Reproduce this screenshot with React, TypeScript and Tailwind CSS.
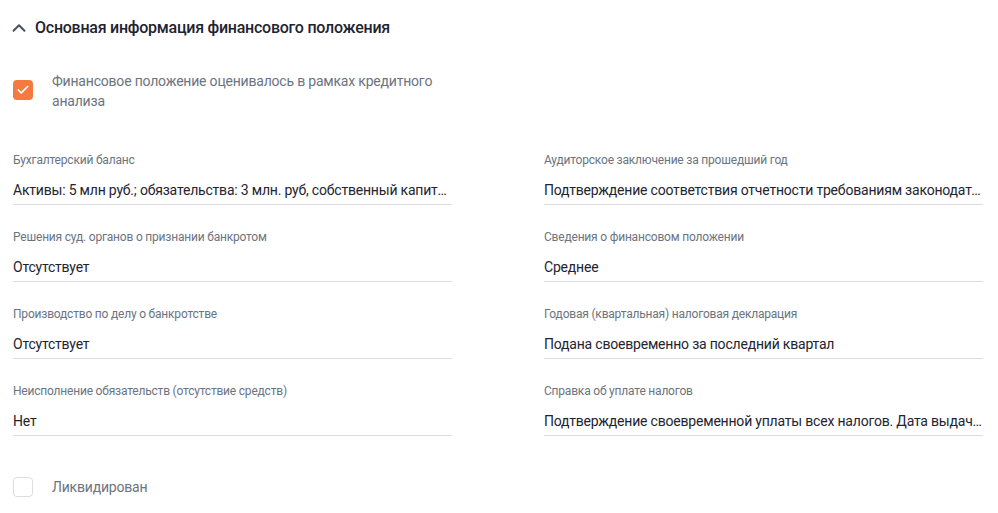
import { ChevronUp, Check } from "lucide-react"

const fields = [
  { label: "Бухгалтерский баланс", value: "Активы: 5 млн руб.; обязательства: 3 млн. руб, собственный капитал: 2 млн руб." },
  { label: "Аудиторское заключение за прошедший год", value: "Подтверждение соответствия отчетности требованиям законодательства" },
  { label: "Решения суд. органов о признании банкротом", value: "Отсутствует" },
  { label: "Сведения о финансовом положении", value: "Среднее" },
  { label: "Производство по делу о банкротстве", value: "Отсутствует" },
  { label: "Годовая (квартальная) налоговая декларация", value: "Подана своевременно за последний квартал" },
  { label: "Неисполнение обязательств (отсутствие средств)", value: "Нет" },
  { label: "Справка об уплате налогов", value: "Подтверждение своевременной уплаты всех налогов. Дата выдачи справки" },
]

function Field({ label, value }: { label: string; value: string }) {
  return (
    <div className="flex flex-col">
      <div className="h-[18px] text-[12px] leading-[18px] tracking-[-0.2px] text-[#6b7480]">{label}</div>
      <div className="mt-[12px] h-[19px] truncate text-[14px] leading-[19px] tracking-[-0.2px] text-[#1e2430]">
        {value}
      </div>
      <div className="mt-[4px] h-px bg-[#dcdde3]" />
    </div>
  )
}

export default function App() {
  return (
    <div className="min-h-screen bg-white pl-[13px] pr-[15px] font-['Roboto',sans-serif]">
      {/* Section header */}
      <div className="flex h-[55px] items-center gap-[5px]">
        <ChevronUp className="-ml-[5px] h-[22px] w-[22px] text-[#4a5160]" strokeWidth={2.2} />
        <h2 className="text-[16px] font-medium leading-5 tracking-[-0.25px] text-[#1e2430]">
          Основная информация финансового положения
        </h2>
      </div>

      {/* Checked option */}
      <div className="mt-[16px] flex items-start gap-[19px]">
        <div className="mt-[9px] flex h-[20px] w-[20px] shrink-0 items-center justify-center rounded-[4px] bg-[#f47a40]">
          <Check className="h-[14px] w-[14px] text-white" strokeWidth={3} />
        </div>
        <p className="w-[400px] text-[14px] leading-[20px] tracking-[-0.2px] text-[#6b7480]">
          Финансовое положение оценивалось в рамках кредитного анализа
        </p>
      </div>

      {/* Fields */}
      <div className="mt-[40px] grid grid-cols-2 gap-x-[92px] gap-y-[23px]">
        {fields.map((f) => (
          <Field key={f.label} label={f.label} value={f.value} />
        ))}
      </div>

      {/* Unchecked option */}
      <div className="mt-[41px] flex items-center gap-[19px]">
        <div className="h-[20px] w-[20px] shrink-0 rounded-[4px] border border-[#dcdde3] bg-white" />
        <span className="text-[14px] leading-5 tracking-[-0.2px] text-[#6b7480]">Ликвидирован</span>
      </div>
    </div>
  )
}
